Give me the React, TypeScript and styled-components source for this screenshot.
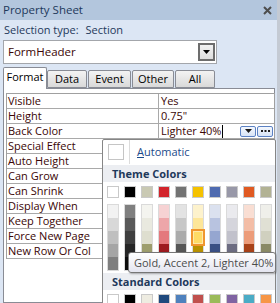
import { Fragment } from 'react';
import styled, { createGlobalStyle } from 'styled-components';

const GlobalStyle = createGlobalStyle`
  html, body {
    margin: 0;
    padding: 0;
    background: #dce6f4;
  }
  body {
    font-family: 'Open Sans', 'Noto Sans', sans-serif;
    font-size: 11px;
    line-height: 1.2;
  }
`;

const Window = styled.div`
  position: relative;
  width: 280px;
  height: 303px;
  overflow: hidden;
  box-sizing: border-box;
  background: #dce6f4;
  border-right: 3px solid #c4cad3;
  display: flex;
  flex-direction: column;
`;

const TitleBar = styled.div`
  height: 20px;
  flex: none;
  display: flex;
  align-items: center;
  justify-content: space-between;
  padding: 0 5px 0 3px;
  background: #b3c6dd;
  color: #1e395b;
  font-size: 11.5px;
`;

const SelectionLine = styled.div`
  height: 20px;
  flex: none;
  display: flex;
  align-items: center;
  padding-left: 4px;
  color: #1e395b;
  font-size: 11px;
`;

const SelectionValue = styled.span`
  margin-left: 7px;
`;

const Combo = styled.div`
  margin-left: 3px;
  width: 214px;
  height: 24px;
  flex: none;
  box-sizing: border-box;
  border: 1px solid #a3a6ab;
  background: #fff;
  display: flex;
  align-items: center;
  padding: 0 1px 0 4px;
  color: #3a0505;
  font-size: 11.5px;
`;

const ComboButton = styled.div`
  margin-left: auto;
  width: 17px;
  height: 18px;
  box-sizing: border-box;
  border: 2px solid #6d6d6d;
  background: linear-gradient(#f2f2f2, #dcdcdc);
  display: flex;
  align-items: center;
  justify-content: center;
`;

const TabRow = styled.div`
  display: flex;
  align-items: flex-end;
  margin: 3px 0 0 3px;
  height: 21px;
  flex: none;
  position: relative;
  z-index: 1;
`;

const Tab = styled.div<{ $w: number; $active?: boolean }>`
  width: ${p => p.$w}px;
  height: ${p => (p.$active ? 22 : 18)}px;
  margin-right: ${p => (p.$active ? 0 : 1)}px;
  margin-bottom: ${p => (p.$active ? -1 : 0)}px;
  box-sizing: border-box;
  border: 1px solid #898c95;
  border-bottom: ${p => (p.$active ? 'none' : '1px solid #898c95')};
  border-radius: 2px 2px 0 0;
  background: ${p => (p.$active ? '#fff' : 'linear-gradient(#f3f3f3, #d9d9d9)')};
  display: flex;
  align-items: ${p => (p.$active ? 'flex-start' : 'center')};
  justify-content: center;
  padding-top: ${p => (p.$active ? 2 : 0)}px;
  color: #000;
  font-size: 11px;
`;

const Panel = styled.div`
  margin-left: 3px;
  width: 272px;
  flex: 1;
  box-sizing: border-box;
  border: 1px solid #898c95;
  background: #fff;
  padding: 4px 0 0 2px;
`;

const Grid = styled.div`
  width: 267px;
  display: grid;
  grid-template-columns: 151px 1fr;
  border-top: 1px solid #a0a0a0;
  border-left: 1px solid #a0a0a0;
  border-right: 1px solid #a0a0a0;
`;

const Cell = styled.div<{ $value?: boolean }>`
  height: 14px;
  line-height: 14px;
  border-bottom: 1px solid #a9a9a9;
  border-left: ${p => (p.$value ? '1px solid #a9a9a9' : 'none')};
  display: flex;
  align-items: center;
  padding-left: ${p => (p.$value ? 2 : 1)}px;
  color: #3a0505;
  font-size: 11px;
  white-space: nowrap;
  overflow: hidden;
`;

const Caret = styled.span`
  width: 1px;
  height: 13px;
  background: #000;
  margin-left: 1px;
`;

const CellButton = styled.div<{ $first?: boolean }>`
  margin-left: ${p => (p.$first ? 'auto' : '1px')};
  margin-right: ${p => (p.$first ? 0 : 1)}px;
  width: 16px;
  height: 11px;
  box-sizing: border-box;
  border: 1px solid #5c82c4;
  border-radius: 2px;
  background: linear-gradient(#f4f8fe, #d8e4f6);
  display: flex;
  align-items: center;
  justify-content: center;
`;

const Popup = styled.div`
  position: absolute;
  left: 102px;
  top: 139px;
  width: 174px;
  height: 180px;
  box-sizing: border-box;
  border: 1px solid #868686;
  border-radius: 2px 2px 0 0;
  background: #fff;
  display: flex;
  flex-direction: column;
`;

const AutoRow = styled.div`
  height: 24px;
  display: flex;
  align-items: center;
  padding-left: 5px;
`;

const AutoSwatch = styled.div`
  width: 16px;
  height: 16px;
  box-sizing: border-box;
  border: 1px solid #c5c5c5;
  background: #fff;
`;

const AutoDivider = styled.div`
  width: 1px;
  height: 24px;
  background: #dcdcdc;
  margin: 0 7px 0 5px;
`;

const AutoLabel = styled.span`
  color: #1b4a8a;
  font-size: 11px;
`;

const SectionHeader = styled.div<{ $mt: number }>`
  height: 17px;
  margin-top: ${p => p.$mt}px;
  display: flex;
  align-items: center;
  padding-left: 9px;
  background: #eceef2;
  color: #1e395b;
  font-weight: bold;
  font-size: 11px;
`;

const SwatchRow = styled.div<{ $mt: number }>`
  display: flex;
  gap: 5px;
  padding-left: 4px;
  margin-top: ${p => p.$mt}px;
`;

const Swatch = styled.div`
  width: 12px;
  height: 12px;
  box-sizing: border-box;
  border: 1px solid #c9c9c9;
`;

const ShadeColumn = styled.div`
  width: 12px;
  box-sizing: border-box;
  border: 1px solid #dadada;
  display: flex;
  flex-direction: column;
`;

const Shade = styled.div<{ $sel?: boolean }>`
  height: 13px;
  position: relative;
  ${p =>
    p.$sel
      ? `outline: 2px solid #f0962e; outline-offset: 0; z-index: 1; box-shadow: inset 0 0 0 1px #ffe9a8;`
      : ''}
`;

const Tooltip = styled.div`
  position: absolute;
  left: 128px;
  top: 252px;
  width: 148px;
  height: 21px;
  box-sizing: border-box;
  border: 1px solid #767676;
  border-radius: 3px;
  background: linear-gradient(#ffffff, #e4e5f0);
  box-shadow: 1px 1px 2px rgba(0, 0, 0, 0.3);
  display: flex;
  align-items: center;
  padding-left: 5px;
  color: #4c4c4c;
  font-size: 11px;
  white-space: nowrap;
`;

const themeTop = ['#ffffff', '#000000', '#c9c9b3', '#d2242b', '#737373', '#f5c200', '#4f6bb0', '#9898a8', '#e05a22', '#b2b294'];

const shades = [
  ['#f2f2f2', '#d8d8d8', '#bfbfbf', '#a5a5a5', '#7f7f7f'],
  ['#7f7f7f', '#595959', '#3f3f3f', '#262626', '#0c0c0c'],
  ['#f4f4ef', '#e9e9df', '#dedecf', '#9d9d6d', '#6a6a48'],
  ['#f6d2d3', '#eda6a9', '#e4797d', '#9d1b20', '#690f13'],
  ['#e3e3e3', '#c7c7c7', '#ababab', '#565656', '#393939'],
  ['#fdf2cc', '#fde699', '#fedb66', '#b89100', '#7b6100'],
  ['#dbe1ef', '#b8c3e0', '#95a6d0', '#3a5084', '#273558'],
  ['#eaeaee', '#d5d5dc', '#c1c1cb', '#6c6c81', '#484856'],
  ['#f9ded3', '#f3bda6', '#ec9c7a', '#a84219', '#702c10'],
  ['#efefea', '#e0e0d4', '#d0d0bf', '#8a8a66', '#5c5c44'],
];

const standard = ['#ffffff', '#000000', '#eeece1', '#1f497d', '#4f81bd', '#c0504d', '#9bbb59', '#8064a2', '#4bacc6', '#f79646'];

const rows = [
  'Visible',
  'Height',
  'Back Color',
  'Special Effect',
  'Auto Height',
  'Can Grow',
  'Can Shrink',
  'Display When',
  'Keep Together',
  'Force New Page',
  'New Row Or Col',
];

const tabs = [
  { label: 'Format', w: 44, active: true },
  { label: 'Data', w: 40 },
  { label: 'Event', w: 43 },
  { label: 'Other', w: 42 },
  { label: 'All', w: 40 },
];

function valueFor(label: string) {
  if (label === 'Visible') return 'Yes';
  if (label === 'Height') return '0.75"';
  return '';
}

export default function App() {
  return (
    <>
      <GlobalStyle />
      <Window>
        <TitleBar>
          <span>Property Sheet</span>
          <svg width="9" height="9" viewBox="0 0 9 9">
            <path d="M1 1 L8 8 M8 1 L1 8" stroke="#4d4d4d" strokeWidth="2" />
          </svg>
        </TitleBar>
        <SelectionLine>
          Selection type:<SelectionValue>Section</SelectionValue>
        </SelectionLine>
        <Combo>
          FormHeader
          <ComboButton>
            <svg width="7" height="4" viewBox="0 0 7 4">
              <path d="M0 0 H7 L3.5 4 Z" fill="#000" />
            </svg>
          </ComboButton>
        </Combo>
        <TabRow>
          {tabs.map(t => (
            <Tab key={t.label} $w={t.w} $active={t.active}>
              {t.label}
            </Tab>
          ))}
        </TabRow>
        <Panel>
          <Grid>
            {rows.map(r => (
              <Fragment key={r}>
                <Cell>{r}</Cell>
                {r === 'Back Color' ? (
                  <Cell $value>
                    Lighter 40%
                    <Caret />
                    <CellButton $first>
                      <svg width="7" height="4" viewBox="0 0 7 4">
                        <path d="M0 0 H7 L3.5 4 Z" fill="#1a1a1a" />
                      </svg>
                    </CellButton>
                    <CellButton>
                      <svg width="9" height="2" viewBox="0 0 9 2">
                        <rect x="0" y="0" width="2" height="2" fill="#1a1a1a" />
                        <rect x="3.5" y="0" width="2" height="2" fill="#1a1a1a" />
                        <rect x="7" y="0" width="2" height="2" fill="#1a1a1a" />
                      </svg>
                    </CellButton>
                  </Cell>
                ) : (
                  <Cell $value>{valueFor(r)}</Cell>
                )}
              </Fragment>
            ))}
          </Grid>
        </Panel>
        <Popup>
          <AutoRow>
            <AutoSwatch />
            <AutoDivider />
            <AutoLabel>
              <u>A</u>utomatic
            </AutoLabel>
          </AutoRow>
          <SectionHeader $mt={1}>Theme Colors</SectionHeader>
          <SwatchRow $mt={4}>
            {themeTop.map(c => (
              <Swatch key={c} style={{ background: c }} />
            ))}
          </SwatchRow>
          <SwatchRow $mt={6}>
            {shades.map((col, i) => (
              <ShadeColumn key={i}>
                {col.map((c, j) => (
                  <Shade key={j} $sel={i === 5 && j === 2} style={{ background: c }} />
                ))}
              </ShadeColumn>
            ))}
          </SwatchRow>
          <SectionHeader $mt={2}>Standard Colors</SectionHeader>
          <SwatchRow $mt={4}>
            {standard.map(c => (
              <Swatch key={c} style={{ background: c }} />
            ))}
          </SwatchRow>
        </Popup>
        <Tooltip>Gold, Accent 2, Lighter 40%</Tooltip>
      </Window>
    </>
  );
}
